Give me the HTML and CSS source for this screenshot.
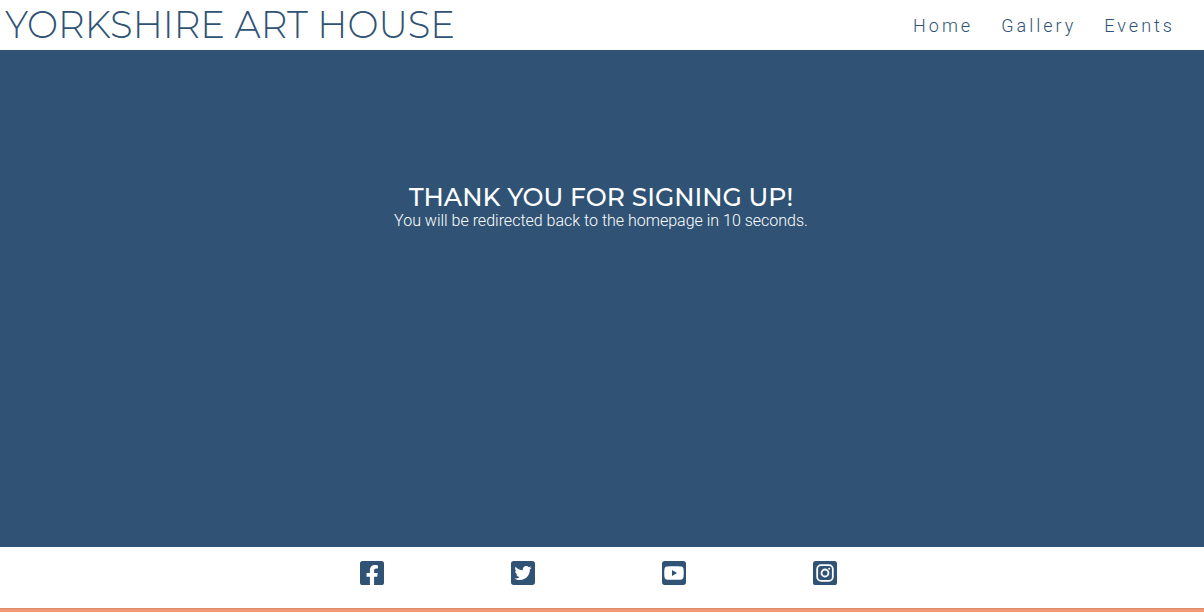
FILE: index.html
```html
<!DOCTYPE html>
<html lang="en">
<head>
<meta charset="utf-8">
<meta name="viewport" content="width=device-width, initial-scale=1">
<title>Yorkshire Art House</title>
<link rel="stylesheet" href="styles.css">
</head>
<body>
<header class="header">
  <a class="logo" href="#"><h1 class="logo-text">YORKSHIRE ART HOUSE</h1></a>
  <nav>
    <ul class="menu">
      <li><a href="#">Home</a></li>
      <li><a href="#">Gallery</a></li>
      <li><a href="#">Events</a></li>
    </ul>
  </nav>
</header>
<main class="thanks">
  <h2 class="thanks-title">THANK YOU FOR SIGNING UP!</h2>
  <p class="thanks-text">You will be redirected back to the homepage in 10 seconds.</p>
</main>
<footer class="footer">
  <ul class="social">
    <li><a href="#" aria-label="Facebook"><svg class="icon" viewBox="0 32 448 448"><path d="M400 32H48A48 48 0 0 0 0 80v352a48 48 0 0 0 48 48h137.25V327.69h-63V256h63v-54.64c0-62.15 37-96.48 93.67-96.48 27.14 0 55.52 4.84 55.52 4.84v61h-31.27c-30.81 0-40.42 19.12-40.42 38.73V256h68.78l-11 71.69h-57.78V480H400a48 48 0 0 0 48-48V80a48 48 0 0 0-48-48z"/></svg></a></li>
    <li><a href="#" aria-label="Twitter"><svg class="icon" viewBox="0 32 448 448"><path d="M400 32H48C21.5 32 0 53.5 0 80v352c0 26.5 21.5 48 48 48h352c26.5 0 48-21.5 48-48V80c0-26.5-21.5-48-48-48zm-48.9 158.8c.2 2.8.2 5.7.2 8.5 0 86.7-66 186.6-186.6 186.6-37.2 0-71.7-10.8-100.7-29.4 5.3.6 10.4.8 15.8.8 30.7 0 58.9-10.4 81.4-28-28.8-.6-53-19.5-61.3-45.5 10.1 1.5 19.2 1.5 29.6-1.2-30-6.1-52.5-32.5-52.5-64.4v-.8c8.7 4.9 18.9 7.9 29.6 8.3a65.447 65.447 0 0 1-29.2-54.6c0-12.2 3.2-23.4 8.9-33.1 32.3 39.8 80.8 65.8 135.2 68.6-9.3-44.5 24-80.6 64-80.6 18.9 0 35.9 7.9 47.9 20.7 14.8-2.8 29-8.3 41.6-15.8-4.9 15.2-15.2 28-28.8 36.1 13.2-1.4 26-5.1 37.8-10.2-8.9 13.1-20.1 24.7-32.9 34z"/></svg></a></li>
    <li><a href="#" aria-label="YouTube"><svg class="icon" viewBox="0 32 448 448"><path d="M186.8 202.1l95.2 54.1-95.2 54.1V202.1zM448 80v352c0 26.5-21.5 48-48 48H48c-26.5 0-48-21.5-48-48V80c0-26.5 21.5-48 48-48h352c26.5 0 48 21.5 48 48zm-42 176.3s0-59.6-7.6-88.2c-4.2-15.8-16.5-28.2-32.2-32.4C337.9 128 224 128 224 128s-113.9 0-142.2 7.7c-15.7 4.2-28 16.6-32.2 32.4-7.6 28.5-7.6 88.2-7.6 88.2s0 59.6 7.6 88.2c4.2 15.8 16.5 27.7 32.2 31.9C110.1 384 224 384 224 384s113.9 0 142.2-7.7c15.7-4.2 28-16.1 32.2-31.9 7.6-28.5 7.6-88.1 7.6-88.1z"/></svg></a></li>
    <li><a href="#" aria-label="Instagram"><svg class="icon" viewBox="0 32 448 448"><rect y="32" width="448" height="448" rx="48"/><rect class="line" x="78" y="110" width="292" height="292" rx="72"/><circle class="line" cx="224" cy="256" r="65"/><circle class="dot" cx="302" cy="178" r="19"/></svg></a></li>
  </ul>
</footer>
</body>
</html>
```
FILE: styles.css
```css
* {
  box-sizing: border-box;
  margin: 0;
  padding: 0;
}

body {
  display: flex;
  flex-direction: column;
  min-height: 100vh;
  background: #fff;
  color: #305375;
  font-family: Roboto, sans-serif;
  font-size: 16px;
}

a {
  color: inherit;
  text-decoration: none;
}

ul {
  list-style: none;
}

.header {
  display: flex;
  align-items: center;
  justify-content: space-between;
  min-height: 50px;
  padding: 0 29px 0 5px;
}

.logo-text {
  font-family: Montserrat, Inter, sans-serif;
  font-size: 37px;
  font-weight: 350;
  line-height: 50px;
}

.menu {
  display: flex;
  gap: 28px;
  font-size: 18px;
  font-weight: 300;
  letter-spacing: 3px;
}

.thanks {
  flex: 1;
  padding: 132px 2px 0 0;
  background: #305375;
  color: #fff;
  text-align: center;
}

.thanks-title {
  font-family: Montserrat, Inter, sans-serif;
  font-size: 25px;
  font-weight: 500;
  line-height: 30px;
}

.thanks-text {
  font-weight: 300;
  line-height: 18px;
}

.footer {
  padding: 14px 0 24px;
  border-bottom: 3px solid #f29a76;
  box-shadow: inset 0 -1px #d98c6c;
}

.social {
  display: grid;
  grid-template-columns: repeat(4, 1fr);
  column-gap: 1px;
  width: 50%;
  margin: 0 auto;
}

.social a {
  display: flex;
  justify-content: center;
  padding-right: 7px;
}

.icon {
  width: 24px;
  height: 24px;
  fill: #305375;
}

.line {
  fill: none;
  stroke: #fff;
  stroke-width: 34;
}

.dot {
  fill: #fff;
}
```
